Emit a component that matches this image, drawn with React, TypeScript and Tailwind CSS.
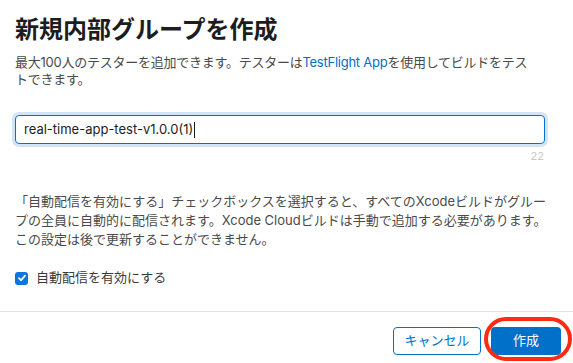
import React from 'react';

const font = { fontFamily: '"Inter", "Noto Sans CJK JP", sans-serif' };

const App = () => {
    return (
        <div className="w-[573px] h-[363px] bg-white overflow-hidden relative" style={font}>
            <div className="pl-[15px] pr-[28px]">
                <h1 className="pt-[14px] text-[24px] leading-[32px] font-bold text-[#1d1d1f]">
                    新規内部グループを作成
                </h1>
                <p className="mt-[8px] text-[13px] leading-[17px] text-[#4a4a4a] whitespace-nowrap tracking-[-0.25px]">
                    最大100人のテスターを追加できます。テスターは<span className="text-[#0070c9]">TestFlight App</span>を使用してビルドをテス
                    <br />
                    トできます。
                </p>

                <div className="mt-[27px] h-[29px] rounded-[4px] border border-[#0070d1] shadow-[0_0_0_3px_#d3e4f6] flex items-center pl-[8px]">
                    <span className="text-[13px] text-[#1d1d1f]">real-time-app-test-v1.0.0(1)</span>
                    <span className="ml-[1px] w-px h-[16px] bg-[#1d1d1f]" />
                </div>
                <div className="mt-[5px] text-right text-[11px] leading-[14px] text-[#c8c8c8] pr-[1px]">22</div>

                <p className="mt-[29px] text-[13px] leading-[19px] text-[#4a4a4a] whitespace-nowrap">
                    「自動配信を有効にする」チェックボックスを選択すると、すべてのXcodeビルドがグルー
                    <br />
                    プの全員に自動的に配信されます。Xcode Cloudビルドは手動で追加する必要があります。
                    <br />
                    この設定は後で更新することができません。
                </p>

                <label className="mt-[20px] flex items-center gap-[8px] h-[18px]">
                    <span className="w-[13px] h-[13px] rounded-[3px] bg-[#0a75e0] flex items-center justify-center">
                        <svg width="10" height="10" viewBox="0 0 10 10" fill="none">
                            <path d="M2 5.2 L4.1 7.3 L8 2.6" stroke="white" strokeWidth="1.8" strokeLinecap="round" strokeLinejoin="round" />
                        </svg>
                    </span>
                    <span className="text-[13px] text-[#3a3a3a]">自動配信を有効にする</span>
                </label>
            </div>

            <div className="mt-[24px] h-px bg-[#e3e3e3]" />

            <div className="flex justify-end gap-[10px] pt-[15px] pr-[12px]">
                <button className="w-[88px] h-[28px] rounded-[4px] border border-[#0070c9] text-[#0070c9] text-[13px] bg-white">
                    キャンセル
                </button>
                <div className="relative">
                    <button className="w-[70px] h-[28px] rounded-[4px] bg-[#0070c9] text-white text-[13px]">
                        作成
                    </button>
                    <div className="absolute left-[-7px] right-[-11px] top-[-10px] bottom-[-6px] rounded-[22px] border-[4px] border-[#ff2a12] pointer-events-none" />
                </div>
            </div>
        </div>
    );
};

export default App;
